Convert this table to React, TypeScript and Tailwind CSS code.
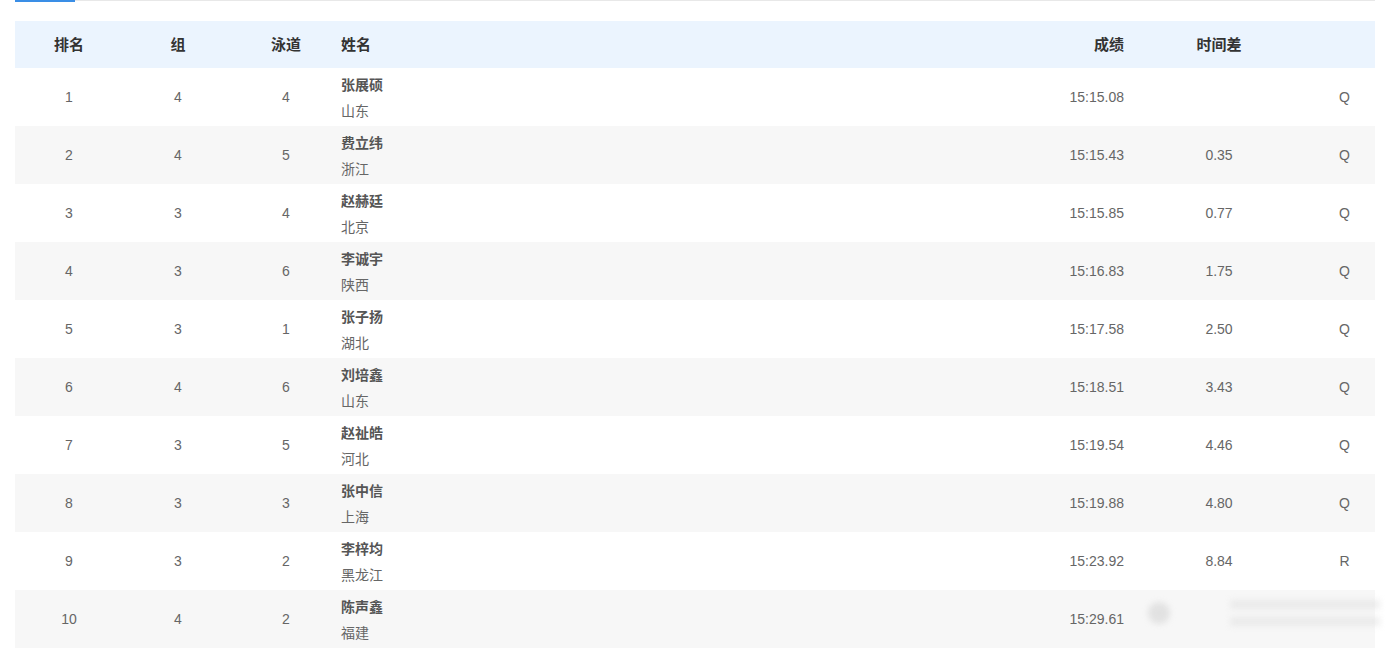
import React from "react";

const rows = [
  ["1", "4", "4", "张展硕", "山东", "15:15.08", "", "Q"],
  ["2", "4", "5", "费立纬", "浙江", "15:15.43", "0.35", "Q"],
  ["3", "3", "4", "赵赫廷", "北京", "15:15.85", "0.77", "Q"],
  ["4", "3", "6", "李诚宇", "陕西", "15:16.83", "1.75", "Q"],
  ["5", "3", "1", "张子扬", "湖北", "15:17.58", "2.50", "Q"],
  ["6", "4", "6", "刘培鑫", "山东", "15:18.51", "3.43", "Q"],
  ["7", "3", "5", "赵祉皓", "河北", "15:19.54", "4.46", "Q"],
  ["8", "3", "3", "张中信", "上海", "15:19.88", "4.80", "Q"],
  ["9", "3", "2", "李梓均", "黑龙江", "15:23.92", "8.84", "R"],
  ["10", "4", "2", "陈声鑫", "福建", "15:29.61", "", ""],
];

const grid = "grid grid-cols-[108px_110px_106px_1fr_100px_190px_61px] items-center";

export default function App() {
  return (
    <div
      className="relative w-[1392px] h-[650px] bg-white overflow-hidden"
      style={{ fontFamily: '"Liberation Sans", "Noto Sans CJK SC", sans-serif' }}
    >
      <div className="mx-[15px] w-[1360px]">
        <div className="relative h-[2px] border-t border-[#e8e8e8]">
          <div className="absolute left-0 top-[-1px] h-[2px] w-[60px] bg-[#3a8ee6]" />
        </div>
        <div className="mt-[19px]">
          <div className={`${grid} h-[47px] pt-[2px] bg-[#ebf4fe] text-[15px] font-bold text-[#333]`}>
            <div className="text-center">排名</div>
            <div className="text-center">组</div>
            <div className="text-center">泳道</div>
            <div className="pl-[2px]">姓名</div>
            <div className="text-right">成绩</div>
            <div className="text-center">时间差</div>
            <div />
          </div>
          {rows.map((r, i) => (
            <div
              key={i}
              className={`${grid} h-[58px] text-[14px] text-[#666] ${
                i % 2 === 1 ? "bg-[#f7f7f7]" : "bg-white"
              }`}
            >
              <div className="text-center">{r[0]}</div>
              <div className="text-center">{r[1]}</div>
              <div className="text-center">{r[2]}</div>
              <div className="pl-[2px] pt-[2px] flex flex-col leading-[26px]">
                <span className="font-bold text-[#555]">{r[3]}</span>
                <span>{r[4]}</span>
              </div>
              <div className="text-right">{r[5]}</div>
              <div className="text-center">{r[6]}</div>
              <div className="text-center">{r[7]}</div>
            </div>
          ))}
        </div>
      </div>
      <div className="absolute left-[1148px] top-[600px] flex items-center gap-[60px] blur-[3px] opacity-60">
        <div className="w-[22px] h-[22px] rounded-full bg-[#d4d4d4]" />
        <div className="flex flex-col gap-[8px]">
          <div className="h-[9px] w-[150px] bg-[#e2e2e2]" />
          <div className="h-[9px] w-[150px] bg-[#e2e2e2]" />
        </div>
      </div>
    </div>
  );
}
